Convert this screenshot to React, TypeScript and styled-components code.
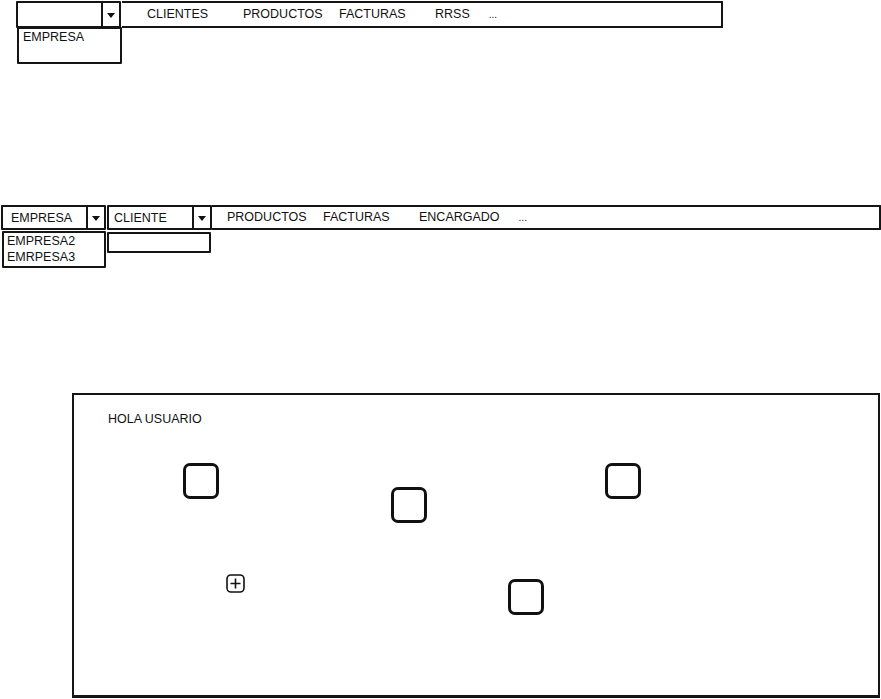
import React from 'react';
import styled, {createGlobalStyle} from 'styled-components';

const GlobalStyle = createGlobalStyle`
    * {
        box-sizing: border-box;
    }

    body {
        margin: 0;
        background: #ffffff;
        color: #111111;
        font-family: "Liberation Sans", Arial, sans-serif;
        font-size: 12.5px;
    }
`

const topNav = ['CLIENTES', 'PRODUCTOS', 'FACTURAS', 'RRSS', '...']
const secondNav = ['PRODUCTOS', 'FACTURAS', 'ENCARGADO', '...']

// places of the widgets on the canvas of the last mockup
const tiles = [
    {id: 1, left: 109, top: 68},
    {id: 2, left: 317, top: 92},
    {id: 3, left: 531, top: 68},
    {id: 4, left: 434, top: 184},
]

type ComboProps = {
    value?: string
    width: number
    height: number
    textLeft?: number
}

const ComboBox = ({value, width, height, textLeft = 6}: ComboProps) => (
    <Combo $width={width} $height={height}>
        <ComboText $left={textLeft}>{value}</ComboText>
        <ComboArrow>
            <Triangle/>
        </ComboArrow>
    </Combo>
)

const NavLinks = ({items}: { items: string[] }) => (
    <>
        {items.map((item, i) => {
            const more = i === items.length - 1
            const beforeMore = i === items.length - 2
            return (
                <NavItem key={item} $more={more} $tight={beforeMore}>{item}</NavItem>
            )
        })}
    </>
)

const PlusIcon = () => (
    <svg width="19" height="19" viewBox="0 0 19 19">
        <rect x="1" y="1" width="17" height="17" rx="4" fill="none" stroke="#111" strokeWidth="1.6"/>
        <path d="M9.5 4.5 V14.5 M4.5 9.5 H14.5" stroke="#111" strokeWidth="1.6"/>
    </svg>
)

export default function App() {
    return (
        <Page>
            <GlobalStyle/>

            <Toolbar $left={16} $top={1}>
                <ComboGroup>
                    <ComboBox width={105} height={27}/>
                    <DropList $width={105} $height={37} $offset={-1} $left={1}>
                        <DropItem $left={4}>EMPRESA</DropItem>
                    </DropList>
                </ComboGroup>
                <NavBar $width={601} $height={27} $pad={25}>
                    <NavLinks items={topNav}/>
                </NavBar>
            </Toolbar>

            <Toolbar $left={1} $top={141}>
                <ComboGroup>
                    <ComboBox value="EMPRESA" width={105} height={25} textLeft={8}/>
                    <DropList $width={104} $height={37} $offset={1} $left={1}>
                        <DropItem $left={3}>EMPRESA2</DropItem>
                        <DropItem $left={3}>EMRPESA3</DropItem>
                    </DropList>
                </ComboGroup>
                <ComboGroup $gap={1}>
                    <ComboBox value="CLIENTE" width={105} height={25} textLeft={5}/>
                    <DropList $width={104} $height={21} $offset={2} $left={0}/>
                </ComboGroup>
                <NavBar $width={669} $height={25} $pad={15}>
                    <NavLinks items={secondNav}/>
                </NavBar>
            </Toolbar>

            <Canvas>
                <Greeting>HOLA USUARIO</Greeting>
                {tiles.map(t => (
                    <Tile key={t.id} style={{left: t.left, top: t.top}}/>
                ))}
                <AddButton>
                    <PlusIcon/>
                </AddButton>
            </Canvas>
        </Page>
    )
}

const Page = styled.div`
    display: flex;
    flex-direction: column;
    width: 881px;
    height: 699px;
    overflow: hidden;
`

const Toolbar = styled.div<{ $left: number, $top: number }>`
    display: flex;
    align-items: flex-start;
    padding-left: ${p => p.$left}px;
    margin-top: ${p => p.$top}px;
`

const ComboGroup = styled.div<{ $gap?: number }>`
    display: flex;
    flex-direction: column;
    margin-left: ${p => p.$gap ?? 0}px;
`

const Combo = styled.div<{ $width: number, $height: number }>`
    display: flex;
    width: ${p => p.$width}px;
    height: ${p => p.$height}px;
    border: 2px solid #151515;
    border-radius: 1px;
    background: #ffffff;
`

const ComboText = styled.span<{ $left: number }>`
    flex: 1;
    display: flex;
    align-items: center;
    padding-left: ${p => p.$left}px;
    white-space: nowrap;
`

const ComboArrow = styled.span`
    display: flex;
    align-items: center;
    justify-content: center;
    width: 18px;
    border-left: 2px solid #151515;
`

const Triangle = styled.span`
    width: 0;
    height: 0;
    border-left: 4.5px solid transparent;
    border-right: 4.5px solid transparent;
    border-top: 5px solid #111111;
    margin-top: 1px;
`

const DropList = styled.div<{ $width: number, $height: number, $offset: number, $left: number }>`
    display: flex;
    flex-direction: column;
    width: ${p => p.$width}px;
    height: ${p => p.$height}px;
    margin-top: ${p => p.$offset}px;
    margin-left: ${p => p.$left}px;
    padding-top: 0;
    border: 2px solid #151515;
    border-radius: 1px;
`

const DropItem = styled.span<{ $left: number }>`
    padding-left: ${p => p.$left}px;
    line-height: 16px;
    white-space: nowrap;
`

const NavBar = styled.nav<{ $width: number, $height: number, $pad: number }>`
    display: flex;
    align-items: center;
    width: ${p => p.$width}px;
    height: ${p => p.$height}px;
    padding-left: ${p => p.$pad}px;
    padding-bottom: 1px;
    border: 2px solid #151515;
    border-left: none;
    border-radius: 0 1px 1px 0;
`

const NavItem = styled.span<{ $more?: boolean, $tight?: boolean }>`
    width: ${p => (p.$more || p.$tight) ? 'auto' : '96px'};
    margin-right: ${p => p.$tight ? '19px' : '0'};
    font-size: ${p => p.$more ? '10px' : '12.5px'};
    white-space: nowrap;
`

const Canvas = styled.section`
    position: relative;
    width: 808px;
    height: 305px;
    margin-top: 125px;
    margin-left: 72px;
    padding: 16px 0 0 34px;
    border: 2px solid #151515;
    border-bottom-width: 3px;
`

const Greeting = styled.h1`
    margin: 0;
    font-size: 12.5px;
    font-weight: normal;
    line-height: 16px;
`

const Tile = styled.div`
    position: absolute;
    width: 36px;
    height: 36px;
    border: 3px solid #111111;
    border-radius: 7px;
`

const AddButton = styled.div`
    position: absolute;
    left: 152px;
    top: 179px;
    width: 19px;
    height: 19px;
    display: flex;
`
